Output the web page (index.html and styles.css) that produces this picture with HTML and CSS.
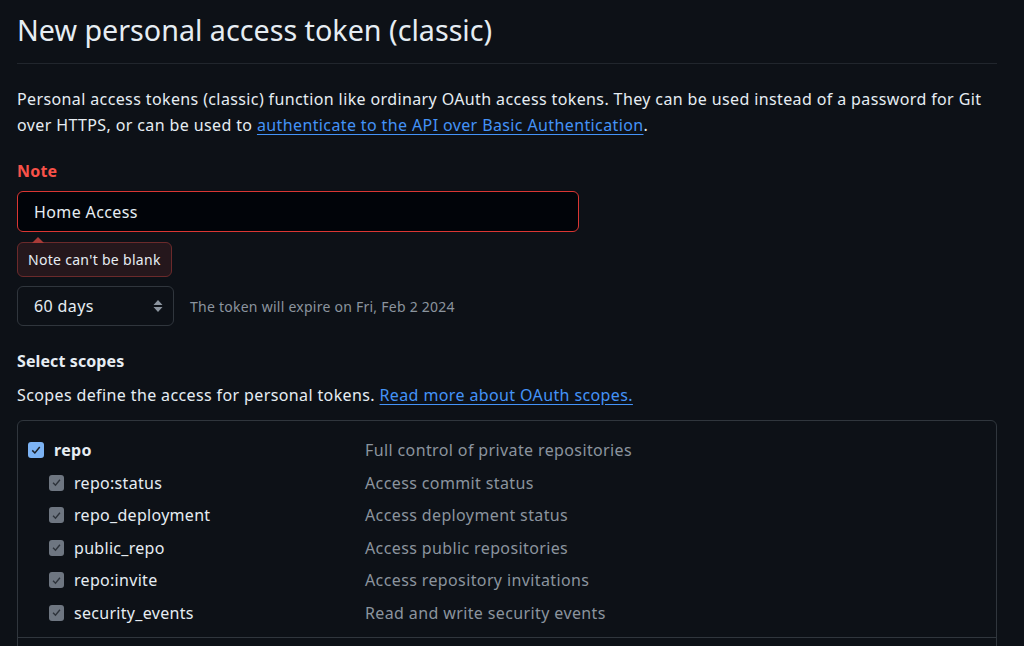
FILE: index.html
```html
<!DOCTYPE html>
<html>
<head>
<meta charset="utf-8">
<link rel="stylesheet" href="styles.css">
</head>
<body>
<main class="page">
  <h1 class="title">New personal access token (classic)</h1>
  <p class="intro">Personal access tokens (classic) function like ordinary OAuth access tokens. They can be used instead of a password for Git over HTTPS, or can be used to <a href="#" class="link">authenticate to the API over Basic Authentication</a>.</p>

  <div class="field">
    <label class="label-error">Note</label>
    <div class="input">Home Access</div>
    <div class="tip">Note can't be blank</div>
  </div>

  <div class="expire-row">
    <div class="select"><span>60 days</span>
      <svg class="arrows" width="10" height="16" viewBox="0 0 10 16"><path d="M5 2 L9.5 7 H0.5 Z M5 14 L9.5 9 H0.5 Z" fill="#8b949e"/></svg>
    </div>
    <span class="expire-note">The token will expire on Fri, Feb 2 2024</span>
  </div>

  <h2 class="subhead">Select scopes</h2>
  <p class="scopes-desc">Scopes define the access for personal tokens. <a href="#" class="link">Read more about OAuth scopes.</a></p>

  <div class="scopes">
    <div class="group">
      <div class="row">
        <span class="name"><span class="cb cb-on"><svg viewBox="0 0 16 16" width="12" height="12"><path d="M3 8.5 L6.5 12 L13 4" fill="none" stroke="#1c2128" stroke-width="2"/></svg></span><b>repo</b></span>
        <span class="desc">Full control of private repositories</span>
      </div>
      <div class="row sub">
        <span class="name"><span class="cb cb-dis"><svg viewBox="0 0 16 16" width="11" height="11"><path d="M3 8.5 L6.5 12 L13 4" fill="none" stroke="#2d333b" stroke-width="2"/></svg></span>repo:status</span>
        <span class="desc">Access commit status</span>
      </div>
      <div class="row sub">
        <span class="name"><span class="cb cb-dis"><svg viewBox="0 0 16 16" width="11" height="11"><path d="M3 8.5 L6.5 12 L13 4" fill="none" stroke="#2d333b" stroke-width="2"/></svg></span>repo_deployment</span>
        <span class="desc">Access deployment status</span>
      </div>
      <div class="row sub">
        <span class="name"><span class="cb cb-dis"><svg viewBox="0 0 16 16" width="11" height="11"><path d="M3 8.5 L6.5 12 L13 4" fill="none" stroke="#2d333b" stroke-width="2"/></svg></span>public_repo</span>
        <span class="desc">Access public repositories</span>
      </div>
      <div class="row sub">
        <span class="name"><span class="cb cb-dis"><svg viewBox="0 0 16 16" width="11" height="11"><path d="M3 8.5 L6.5 12 L13 4" fill="none" stroke="#2d333b" stroke-width="2"/></svg></span>repo:invite</span>
        <span class="desc">Access repository invitations</span>
      </div>
      <div class="row sub">
        <span class="name"><span class="cb cb-dis"><svg viewBox="0 0 16 16" width="11" height="11"><path d="M3 8.5 L6.5 12 L13 4" fill="none" stroke="#2d333b" stroke-width="2"/></svg></span>security_events</span>
        <span class="desc">Read and write security events</span>
      </div>
    </div>
    <div class="group"></div>
  </div>
</main>
</body>
</html>
```

FILE: styles.css
```css
* { box-sizing: border-box; }
html, body {
  margin: 0;
  background: #0d1117;
  color: #e6edf3;
  font-family: "Noto Sans", "Open Sans", sans-serif;
  overflow: hidden;
  height: 646px;
}
.page {
  width: 980px;
  margin-left: 17px;
  padding-top: 10px;
  font-size: 16px;
  letter-spacing: 0.38px;
}
.title {
  font-size: 28.7px;
  font-weight: 400;
  letter-spacing: 0;
  margin: 0;
  padding-bottom: 13px;
  border-bottom: 1px solid #21262d;
  line-height: 40px;
}
.intro {
  line-height: 26px;
  margin: 22px 0 0 0;
}
.link {
  color: #4493f8;
  text-decoration: underline;
  text-underline-offset: 3px;
}
.field {
  margin-top: 22px;
  display: flex;
  flex-direction: column;
}
.label-error {
  color: #f85149;
  font-weight: 700;
  line-height: 22px;
  letter-spacing: 0.2px;
}
.input {
  margin-top: 9px;
  width: 562px;
  height: 41px;
  background: #010409;
  border: 1px solid #da3633;
  border-radius: 6px;
  padding: 0 16px;
  display: flex;
  align-items: center;
}
.tip {
  position: relative;
  margin-top: 10px;
  align-self: flex-start;
  height: 35px;
  padding: 0 10px;
  display: flex;
  align-items: center;
  font-size: 14px;
  letter-spacing: 0.3px;
  background: #25171c;
  border: 1px solid #6b2a2b;
  border-radius: 6px;
}
.tip::before {
  content: "";
  position: absolute;
  left: 14px;
  top: -6px;
  border-left: 6px solid transparent;
  border-right: 6px solid transparent;
  border-bottom: 6px solid #a83a37;
}
.expire-row {
  margin-top: 9px;
  display: flex;
  align-items: center;
  gap: 16px;
}
.select {
  width: 157px;
  height: 40px;
  border: 1px solid #30363d;
  border-radius: 6px;
  padding: 0 10px 0 16px;
  display: flex;
  align-items: center;
  justify-content: space-between;
}
.expire-note {
  color: #8b949e;
  font-size: 14px;
  letter-spacing: 0.25px;
}
.subhead {
  margin: 24px 0 0 0;
  font-size: 16px;
  font-weight: 700;
  line-height: 22px;
  letter-spacing: 0.1px;
}
.scopes-desc {
  margin: 12px 0 0 0;
  line-height: 22px;
}
.scopes {
  margin-top: 14px;
  border: 1px solid #30363d;
  border-radius: 6px;
  height: 260px;
}
.group {
  padding: 13px 0 8px 10px;
  border-bottom: 1px solid #30363d;
}
.row {
  display: flex;
  align-items: center;
  height: 32.5px;
}
.name {
  display: flex;
  align-items: center;
  width: 337px;
  letter-spacing: 0.3px;
}
.sub .name { padding-left: 21px; }
.desc { color: #8b949e; }
.cb {
  width: 16px;
  height: 16px;
  border-radius: 3px;
  display: inline-flex;
  align-items: center;
  justify-content: center;
  margin-right: 10px;
  flex-shrink: 0;
}
.cb-on { background: #7cb3f4; }
.cb-dis { background: #6e7681; width: 15px; height: 16px; }
```
